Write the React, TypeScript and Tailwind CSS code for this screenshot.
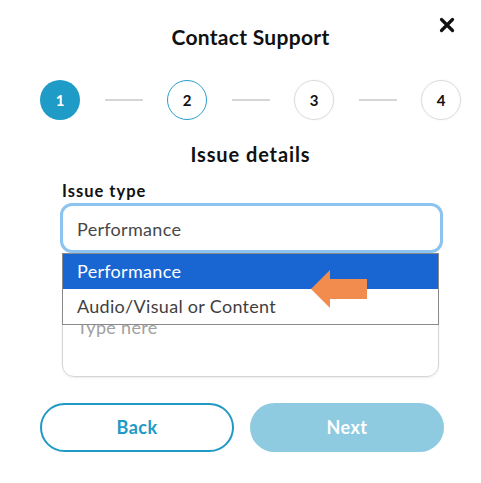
import React from 'react';

const steps = [1, 2, 3, 4];

export default function App() {
  return (
    <div className="w-[481px] h-[483px] bg-white text-[#111] font-['Lato','Noto_Sans',sans-serif]">
      {/* Header */}
      <div className="relative pl-[20px] pt-[25px] flex justify-center">
        <h1 className="text-[21px] leading-[24px] font-bold tracking-[0.3px]">Contact Support</h1>
        <button className="absolute top-[17px] right-[26px]">
          <svg width="16" height="16" viewBox="0 0 16 16">
            <path d="M2.5 2.5 L13.5 13.5 M13.5 2.5 L2.5 13.5" stroke="#111" strokeWidth="3.2" strokeLinecap="round" />
          </svg>
        </button>
      </div>

      {/* Stepper */}
      <div className="mt-[31px] ml-[40px] w-[421px] flex items-center">
        {steps.map((n, i) => (
          <React.Fragment key={n}>
            <div
              className={`w-10 h-10 rounded-full flex items-center justify-center text-[15px] font-bold ${
                n === 1
                  ? 'bg-[#1f9bc7] text-white'
                  : n === 2
                  ? 'border-[1.5px] border-[#2a9fca] text-[#111]'
                  : 'border border-[#dcdcdc] text-[#111] shadow-[0_0_2px_rgba(0,0,0,0.08)]'
              }`}
            >
              {n}
            </div>
            {i < steps.length - 1 && (
              <div className="flex-1 flex justify-center">
                <div className="w-[38px] h-[2px] bg-[#d6d6d6]" />
              </div>
            )}
          </React.Fragment>
        ))}
      </div>

      <h2 className="mt-[22px] pl-[20px] text-center text-[20px] leading-[24px] font-bold tracking-[0.9px]">Issue details</h2>

      {/* Form */}
      <label className="block mt-[15px] ml-[62px] text-[16.5px] leading-[20px] font-bold tracking-[1px]">Issue type</label>
      <div className="relative mt-[2px] ml-[60px] w-[383px]">
        <div className="h-[50px] rounded-[12px] border-[3px] border-[#8cc4f1] flex items-center pl-[14px] pt-[2px] text-[18px] tracking-[0.3px] text-[#474747]">
          Performance
        </div>
        <div className="absolute top-full left-[2px] right-[4px] z-10 border border-[#8a8a8a] bg-white text-[18px] tracking-[0.3px]">
          <div className="h-[35px] flex items-center pl-[14px] bg-[#1966d2] text-white">Performance</div>
          <div className="h-[35px] flex items-center pl-[14px] text-[#3f3f3f]">Audio/Visual or Content</div>
        </div>
        <svg className="absolute z-20 left-[251px] top-[67px]" width="57" height="39" viewBox="0 0 57 39">
          <polygon points="0,19 19,0 19,9 56,9 56,29 19,29 19,38" fill="#f28c4e" />
        </svg>
      </div>

      <div className="mt-[49px] ml-[62px] w-[377px] h-[75px] rounded-[12px] border border-[#d6d6d6] shadow-[0_1px_2px_rgba(0,0,0,0.08)] px-[14px] pt-[12px] text-[18px] leading-[24px] tracking-[0.3px] text-[#a0a0a0]">
        Type here
      </div>

      {/* Buttons */}
      <div className="mt-[26px] ml-[40px] flex gap-[16px]">
        <button className="w-[194px] h-[49px] rounded-full border-2 border-[#2199c5] text-[#2199c5] text-[18px] font-bold tracking-[0.5px]">
          Back
        </button>
        <button className="w-[194px] h-[49px] rounded-full bg-[#8ecbe1] text-white text-[18px] font-bold tracking-[0.5px]">
          Next
        </button>
      </div>
    </div>
  );
}
